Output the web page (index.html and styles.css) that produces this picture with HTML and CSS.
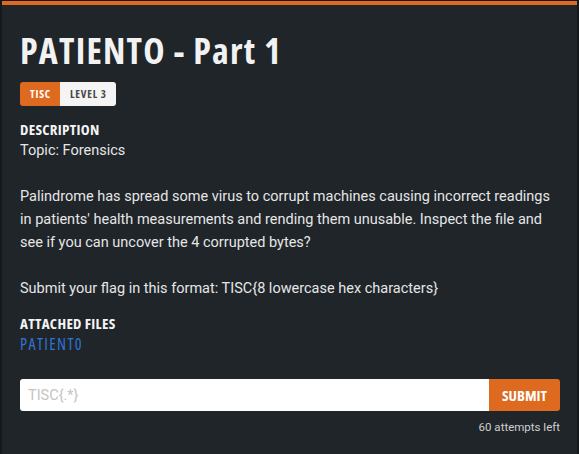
FILE: index.html
```html
<!DOCTYPE html>
<html>
<head>
<meta charset="utf-8">
<link rel="stylesheet" href="styles.css">
</head>
<body>
<div class="panel">
  <h1 class="title">PATIENTO - Part 1</h1>
  <div class="badges"><span class="badge badge-cat">TISC</span><span class="badge badge-level">LEVEL 3</span></div>
  <h2 class="label">DESCRIPTION</h2>
  <div class="desc">
    <p>Topic: Forensics</p>
    <p class="spaced">Palindrome has spread some virus to corrupt machines causing incorrect readings in patients' health measurements and rending them unusable. Inspect the file and see if you can uncover the 4 corrupted bytes?</p>
    <p class="spaced">Submit your flag in this format: TISC{8 lowercase hex characters}</p>
  </div>
  <h2 class="label files-label">ATTACHED FILES</h2>
  <a class="file" href="#">PATIENT0</a>
  <form class="flag-form">
    <input class="flag-input" type="text" placeholder="TISC{.*}">
    <button class="submit" type="button">SUBMIT</button>
  </form>
  <div class="attempts">60 attempts left</div>
</div>
</body>
</html>
```
FILE: styles.css
```css
html, body { margin: 0; padding: 0; }
body {
  background: #15191c;
  width: 579px;
  height: 454px;
  overflow: hidden;
  font-family: Roboto, "Liberation Sans", sans-serif;
}
.panel {
  box-sizing: border-box;
  height: 453px;
  margin: 1px 2px 0 2px;
  background: #1f2529;
  border-top: 4px solid #de6a1f;
  padding: 24px 17px 0 18px;
  color: #e8e8e8;
}
.title, .badge, .label, .file, .submit {
  font-family: "Open Sans", "DejaVu Sans Condensed", sans-serif;
  font-stretch: 75%;
}
.title {
  margin: 0;
  font-weight: 700;
  font-size: 36px;
  letter-spacing: 1.2px;
  line-height: 44px;
  color: #f2f2f2;
}
.badges {
  display: flex;
  margin-top: 9px;
}
.badge {
  font-weight: 700;
  font-size: 11px;
  letter-spacing: 0.8px;
  line-height: 24px;
  height: 24px;
  padding: 0 9px 0 10px;
}
.badge-cat {
  background: #de6a1f;
  color: #fff;
  border-radius: 3px 0 0 3px;
}
.badge-level {
  background: #f4f4f4;
  color: #474747;
  border-radius: 0 3px 3px 0;
}
.label {
  margin: 13px 0 0 0;
  font-weight: 700;
  font-size: 15px;
  letter-spacing: 0.3px;
  line-height: 20px;
  color: #f4f4f4;
}
.desc {
  font-size: 14.5px;
  line-height: 23px;
  color: #e6e6e6;
}
.desc p { margin: 0; }
.desc p.spaced { margin-top: 23px; }
.files-label { margin-top: 13px; }
.file {
  display: block;
  font-size: 16px;
  letter-spacing: 1.4px;
  line-height: 22px;
  color: #3172d4;
  text-decoration: none;
}
.flag-form {
  display: flex;
  margin-top: 24px;
}
.flag-input {
  flex: 1;
  height: 32px;
  box-sizing: border-box;
  border: none;
  border-radius: 3px 0 0 3px;
  padding: 0 8px;
  font-family: Roboto, sans-serif;
  font-size: 14.5px;
  color: #333;
  background: #fff;
  outline: none;
}
.flag-input::placeholder { color: #c4c4c4; }
.submit {
  width: 71px;
  height: 32px;
  border: none;
  border-radius: 0 3px 3px 0;
  background: #de6a1f;
  color: #fff;
  font-weight: 700;
  font-size: 15px;
  padding: 0;
}
.attempts {
  text-align: right;
  margin-top: 9px;
  font-size: 11.5px;
  color: #cfcfcf;
}
```
